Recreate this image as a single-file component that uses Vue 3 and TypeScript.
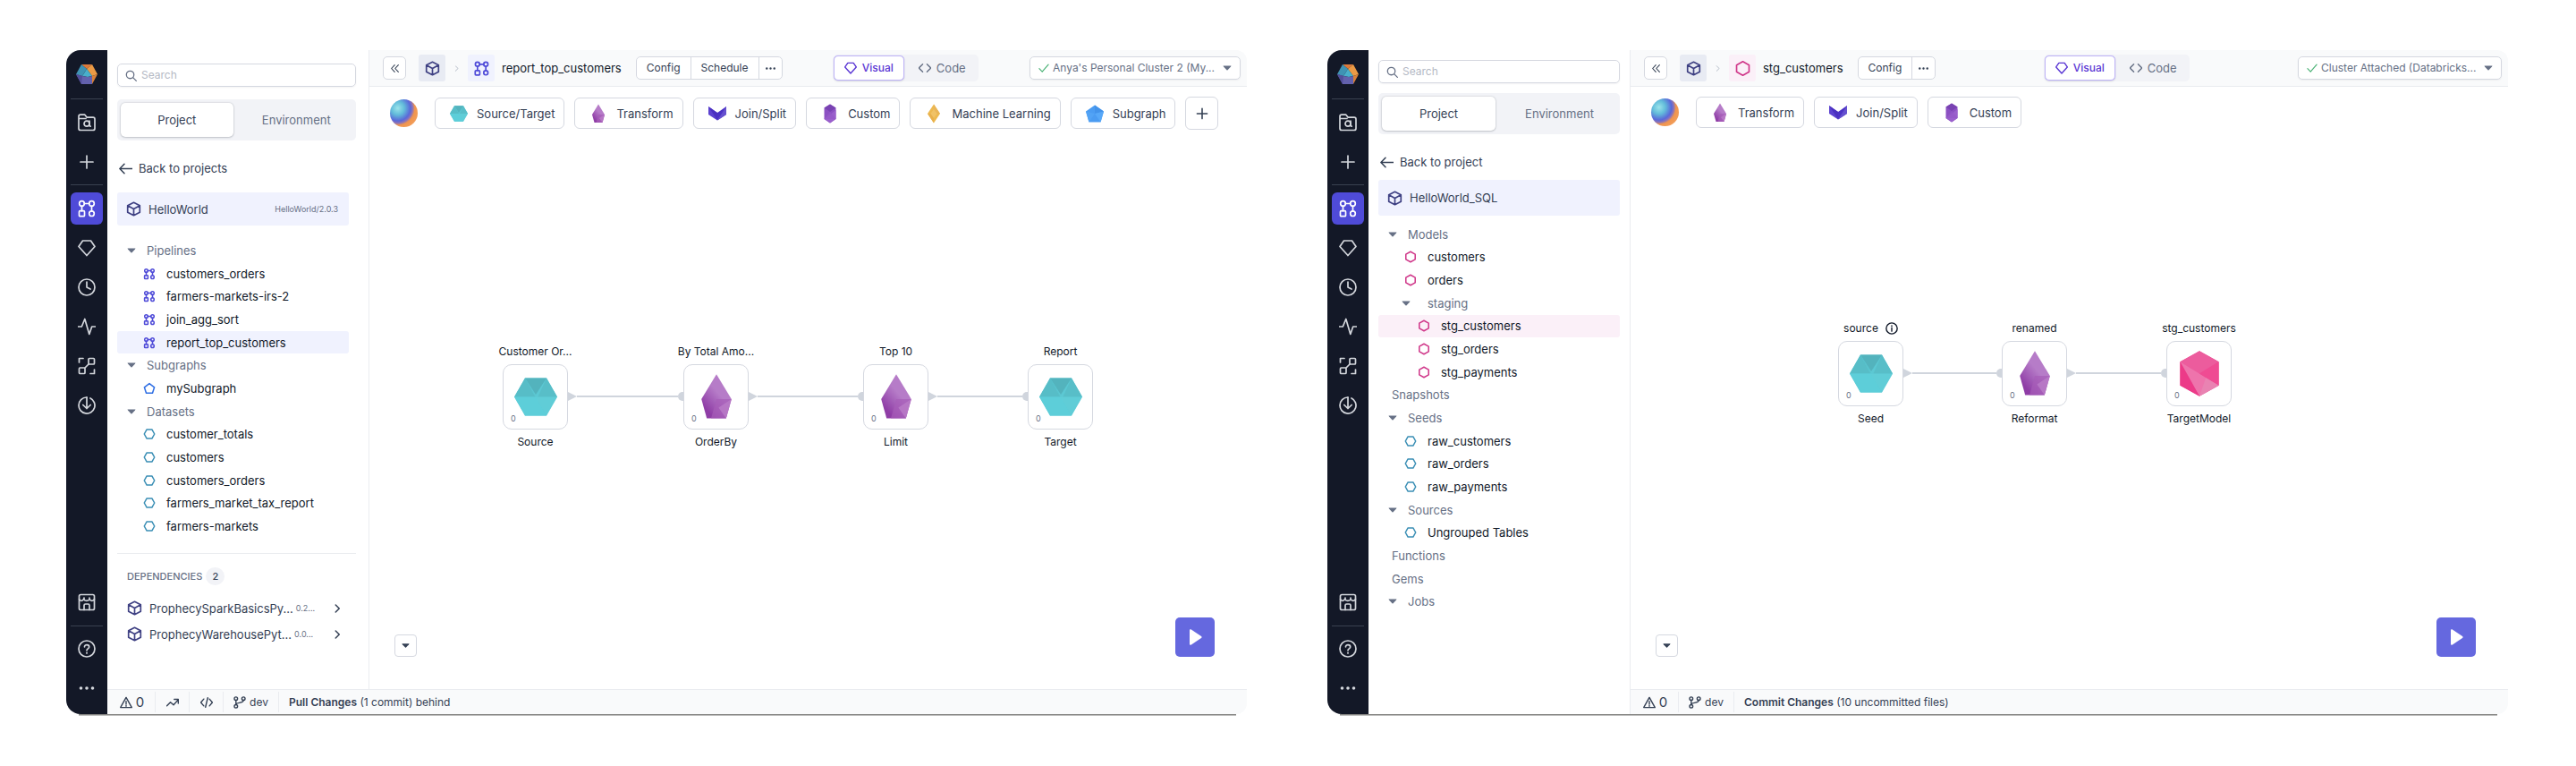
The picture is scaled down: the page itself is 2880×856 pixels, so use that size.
<script setup lang="ts">
type RowKind = 'group' | 'plain' | 'item' | 'subgroup' | 'subitem'

interface TreeRow {
  kind: RowKind
  label: string
  icon?: string
  tone?: string
  selected?: boolean
}
interface GraphNode {
  title: string
  label: string
  gem: string
  x: number
  info?: boolean
}
interface Dependency {
  name: string
  version: string
}
interface Workspace {
  id: string
  back: string
  project: string
  version?: string
  rows: TreeRow[]
  dependencies: Dependency[]
  wideStatus: boolean
  entityIcon: string
  entityTone: string
  entity: string
  actions: string[]
  cluster: string
  gems: { label: string; gem: string }[]
  canAdd: boolean
  nodes: GraphNode[]
  nodeTop: number
  statusIcons: string[]
  commitAction: string
  commitNote: string
}

const NODE_SIZE = 73

const icons: Record<string, string> = {
  folder:
    '<path d="M1 5.500V3.200C1 2 1.800 1.200 3 1.200h4.800l2.400 3H17c1.200 0 2 .8 2 2v10.300c0 1.200-.8 2-2 2H3c-1.200 0-2-.8-2-2V5.500h8"/><circle cx="10" cy="11.200" r="3"/><path d="M13 8.200v5.200l1.200.8"/>',
  plus: '<path d="M10 3v14M3 10h14"/>',
  pipeline:
    '<circle cx="4.500" cy="4.500" r="2.800"/><circle cx="15.500" cy="4.500" r="2.800"/><circle cx="15.500" cy="15.700" r="2.800"/><rect x="1.500" y="12.700" width="6" height="6" rx="1"/><path d="M7.300 4.500h5.400M4.500 7.300v5.400M15.500 7.300v5.600"/>',
  diamond: '<path d="M5.500 2h9L19 8.500 10 18.500 1 8.500z"/>',
  clock: '<circle cx="10" cy="10" r="9"/><path d="M10 4v6l4 2"/>',
  activity: '<path d="M.5 10h3.800L7.800 1.500l5 17L15.700 10h3.800"/>',
  nodes:
    '<path d="M1.500 6V1.500H6M18.500 14v4.500H14"/><rect x="12" y="1.500" width="6.500" height="6.500" rx="1"/><rect x="1.500" y="12" width="6.500" height="6.500" rx="1"/><path d="M8 12l4-4"/>',
  download: '<path d="M10 1v12.500M5.800 9.500l4.200 4 4.200-4"/><path d="M10 1C5 1 1 5 1 10a9 9 0 1 0 13-8"/>',
  store:
    '<rect x="1.500" y="1.500" width="17" height="17" rx="1.800"/><path d="M1.500 6.500c1 2.500 4 2.500 5 0 1.200 2.500 5.500 2.500 6.700 0 1 2.500 4.300 2.500 5.300 0M7 5v2M13 5v2M7 18.500v-5c0-.8.500-1.500 1.500-1.500h3c1 0 1.500.7 1.500 1.500v5"/>',
  help: '<circle cx="10" cy="10" r="9"/><path d="M7.500 7.800c0-3 5.200-3 5.200.2 0 1.800-2.700 2-2.700 3.800M10 14.300v.7"/>',
  dots: '<g fill="currentColor" stroke="none"><circle cx="3.500" cy="10" r="1.800"/><circle cx="10" cy="10" r="1.800"/><circle cx="16.500" cy="10" r="1.800"/></g>',
  cube: '<path d="M10 1.500l8 4.200v8.600l-8 4.200-8-4.200V5.700zM2 5.700l8 4.300 8-4.300M10 10v8.500"/>',
  hexFlat: '<path d="M5.500 2h9L19 10l-4.500 8h-9L1 10z"/>',
  hexTall: '<path d="M10 1l8.200 4.500v9L10 19l-8.200-4.500v-9z"/>',
  pentagon: '<path d="M10 1.500l8.800 6.600-3.300 10.200h-11L1.200 8.100z"/>',
  search: '<circle cx="8.500" cy="8.500" r="6.500"/><path d="M13.300 13.300L19 19"/>',
  back: '<path d="M19.500 10H1.500M8 3l-6.800 7L8 17"/>',
  caret: '<path d="M1 5h18l-1 2-7 7.500q-1 1-2 0L2 7z" fill="currentColor" stroke="none"/>',
  collapse: '<path d="M9.500 3L3 10l6.500 7M17 3l-6.500 7 6.500 7"/>',
  chevron: '<path d="M6.500 2l8 8-8 8"/>',
  code: '<path d="M6.500 4l-6 6 6 6M13.500 4l6 6-6 6"/>',
  codeSlash: '<path d="M5.500 4.500L.8 10l4.700 5.500M14.500 4.500l4.700 5.500-4.700 5.500M11.800 2.500l-3.600 15"/>',
  check: '<path d="M1.500 11l5.500 6L18.500 3.500"/>',
  warning: '<path d="M10 2l9 16H1zM10 8v5M10 15v1"/>',
  trend: '<path d="M.8 15.500l5.700-6 5 4.500 7.500-8.500M12.500 5H19v6.500"/>',
  branch: '<circle cx="4" cy="3.800" r="2.600"/><circle cx="4" cy="16.200" r="2.600"/><circle cx="16" cy="3.800" r="2.600"/><path d="M4 6.400v7.200M16 6.400c0 6-12 2.500-12 7.200"/>',
  info: '<circle cx="10" cy="10" r="8.800"/><path d="M10 9v5.500M10 5.500v1"/>',
  play: '<path d="M4 2.500c0-1.200 1-1.500 1.800-1L17 9c.8.600.8 1.400 0 2L5.800 18.500C5 19 4 18.700 4 17.500z" fill="currentColor" stroke="none"/>',
}

const gems: Record<string, string> = {
  source:
    '<path d="M10 4.500h20L40 22 30 39.500H10L0 22z" fill="#5cc8d3"/><path d="M10 4.500h20L20 20z" fill="#53b3bd"/><path d="M30 4.500L40 22H22z" fill="#58bec8"/><path d="M10 4.500L20 22H0z" fill="#57bdc7"/><path d="M0 22h20l10 17.500H10z" fill="#5dced9"/><path d="M10 6l20 33.500L40 22H20z" fill="#62d0da" opacity=".6"/>',
  transform:
    '<defs><linearGradient id="violet" gradientUnits="userSpaceOnUse" x1="9" y1="32" x2="23" y2="20"><stop offset="0" stop-color="#8f3da6"/><stop offset="1" stop-color="#b67cc8"/></linearGradient></defs><path d="M20 1l14 23-5 18H11L6 24z" fill="url(#violet)"/><path d="M20 24h14l-5 18H15z" fill="#a65cb8" opacity=".7"/><path d="M34 24l-12 8 7 10z" fill="#ba7dc8" opacity=".8"/>',
  join:
    '<path d="M0 6l20 14v17L0 24z" fill="#5c42d0"/><path d="M40 6L20 20v17l20-13z" fill="#4b32c4"/><path d="M0 6l20 31V20z" fill="#4a30c0"/><path d="M40 6v18L20 37z" fill="#6550cf"/>',
  custom:
    '<path d="M20 1l13 8v25l-13 9L7 34V9z" fill="#8b50c2"/><path d="M20 1l13 8-13 9L7 9z" fill="#7943b2"/><path d="M7 34l26-20v20l-13 9z" fill="#9a60cc"/><path d="M20 18l13 16H7z" fill="#9458c8" opacity=".7"/>',
  ml: '<path d="M20 1l14 21-14 21L6 22z" fill="#edb950"/><path d="M20 1l14 21H20z" fill="#e9b558"/><path d="M6 22h14v21z" fill="#e8b04c"/><path d="M20 12l7 10-7 10-7-10z" fill="#f0c266"/>',
  subgraph:
    '<path d="M20 3l20 14-7 24H7L0 17z" fill="#4b9cf2"/><path d="M20 3l20 14-20 5z" fill="#4393ea"/><path d="M20 22l20-5-7 24z" fill="#57a8f8"/><path d="M0 17l20 5L7 41z" fill="#52a3f5"/>',
  model:
    '<path d="M20 1l18 10v22L20 43 2 33V11z" fill="#ee4d94"/><path d="M20 1l18 10-18 11L2 11z" fill="#ec5c9d"/><path d="M2 11l36 22-18 10z" fill="#ee74ac"/><path d="M2 11l18 32L2 33z" fill="#ec3a88"/><path d="M38 11v22L20 22z" fill="#ef4b93"/><path d="M20 43l6-17 12 7z" fill="#e983b2"/>',
}

const railTop = ['folder', 'plus']
const railMain = ['pipeline', 'diamond', 'clock', 'activity', 'nodes', 'download']
const iconLabels: Record<string, string> = {
  folder: 'Browse',
  plus: 'Create',
  pipeline: 'Pipelines',
  diamond: 'Gems',
  clock: 'Jobs',
  activity: 'Monitoring',
  nodes: 'Lineage',
  download: 'Transpiler',
  trend: 'Trends',
  codeSlash: 'Source',
}

const pipe = (label: string, selected = false): TreeRow => ({ kind: 'item', label, icon: 'pipeline', tone: 'indigo', selected })
const dataset = (label: string): TreeRow => ({ kind: 'item', label, icon: 'hexFlat', tone: 'teal' })
const model = (label: string, kind: RowKind = 'item', selected = false): TreeRow => ({ kind, label, icon: 'hexTall', tone: 'pink', selected })
const group = (label: string, kind: RowKind = 'group'): TreeRow => ({ kind, label })

const workspaces: Workspace[] = [
  {
    id: 'spark',
    back: 'Back to projects',
    project: 'HelloWorld',
    version: 'HelloWorld/2.0.3',
    rows: [
      group('Pipelines'),
      pipe('customers_orders'),
      pipe('farmers-markets-irs-2'),
      pipe('join_agg_sort'),
      pipe('report_top_customers', true),
      group('Subgraphs'),
      { kind: 'item', label: 'mySubgraph', icon: 'pentagon', tone: 'blue' },
      group('Datasets'),
      dataset('customer_totals'),
      dataset('customers'),
      dataset('customers_orders'),
      dataset('farmers_market_tax_report'),
      dataset('farmers-markets'),
    ],
    dependencies: [
      { name: 'ProphecySparkBasicsPy...', version: '0.2...' },
      { name: 'ProphecyWarehousePyt...', version: '0.0...' },
    ],
    wideStatus: true,
    entityIcon: 'pipeline',
    entityTone: 'indigo',
    entity: 'report_top_customers',
    actions: ['Config', 'Schedule'],
    cluster: "Anya's Personal Cluster 2 (My...",
    gems: [
      { label: 'Source/Target', gem: 'source' },
      { label: 'Transform', gem: 'transform' },
      { label: 'Join/Split', gem: 'join' },
      { label: 'Custom', gem: 'custom' },
      { label: 'Machine Learning', gem: 'ml' },
      { label: 'Subgraph', gem: 'subgraph' },
    ],
    canAdd: true,
    nodes: [
      { title: 'Customer Or...', label: 'Source', gem: 'source', x: 149 },
      { title: 'By Total Amo...', label: 'OrderBy', gem: 'transform', x: 351 },
      { title: 'Top 10', label: 'Limit', gem: 'transform', x: 552 },
      { title: 'Report', label: 'Target', gem: 'source', x: 736 },
    ],
    nodeTop: 288,
    statusIcons: ['trend', 'codeSlash'],
    commitAction: 'Pull Changes',
    commitNote: '(1 commit) behind',
  },
  {
    id: 'sql',
    back: 'Back to project',
    project: 'HelloWorld_SQL',
    rows: [
      group('Models'),
      model('customers'),
      model('orders'),
      group('staging', 'subgroup'),
      model('stg_customers', 'subitem', true),
      model('stg_orders', 'subitem'),
      model('stg_payments', 'subitem'),
      group('Snapshots', 'plain'),
      group('Seeds'),
      dataset('raw_customers'),
      dataset('raw_orders'),
      dataset('raw_payments'),
      group('Sources'),
      dataset('Ungrouped Tables'),
      group('Functions', 'plain'),
      group('Gems', 'plain'),
      group('Jobs'),
    ],
    dependencies: [],
    wideStatus: false,
    entityIcon: 'hexTall',
    entityTone: 'pink',
    entity: 'stg_customers',
    actions: ['Config'],
    cluster: 'Cluster Attached (Databricks...',
    gems: [
      { label: 'Transform', gem: 'transform' },
      { label: 'Join/Split', gem: 'join' },
      { label: 'Custom', gem: 'custom' },
    ],
    canAdd: false,
    nodes: [
      { title: 'source', label: 'Seed', gem: 'source', x: 232, info: true },
      { title: 'renamed', label: 'Reformat', gem: 'transform', x: 415 },
      { title: 'stg_customers', label: 'TargetModel', gem: 'model', x: 599 },
    ],
    nodeTop: 262,
    statusIcons: [],
    commitAction: 'Commit Changes',
    commitNote: '(10 uncommitted files)',
  },
]

const nodeStyle = (w: Workspace, n: GraphNode) => ({ left: `${n.x}px`, top: `${w.nodeTop}px` })
const wireStyle = (w: Workspace, i: number) => ({
  left: `${w.nodes[i].x + NODE_SIZE}px`,
  width: `${w.nodes[i + 1].x - w.nodes[i].x - NODE_SIZE}px`,
  top: `${w.nodeTop + 53}px`,
})
const hasCaret = (r: TreeRow) => r.kind === 'group' || r.kind === 'subgroup'
</script>

<template>
  <main class="page">
    <section v-for="w in workspaces" :key="w.id" class="window" :class="w.id" :aria-label="w.project">
      <div class="body">
        <nav class="rail" aria-label="Main">
          <a href="#" class="logo" aria-label="Home">
            <svg viewBox="0 0 24 22" width="24" height="22">
              <path d="M6 0h12l-6 5z" fill="#dd7a3a" />
              <path d="M18 0l6 11-6 2-6-8z" fill="#eb9a45" />
              <path d="M6 0l6 5-5 8-7-2z" fill="#3f93b4" />
              <path d="M12 5l6 8-5 1-6-1z" fill="#49aecb" />
              <path d="M0 11l7 2 6 1 5-1v9H6z" fill="#6361ad" />
              <path d="M0 11l7 2-1 9z" fill="#524e9b" />
              <path d="M24 11l-6 11v-9z" fill="#d98138" />
            </svg>
          </a>
          <hr />
          <button v-for="i in railTop" :key="i" type="button" class="rail-btn" :aria-label="iconLabels[i]">
            <span class="rail-face"><svg class="ic" viewBox="0 0 20 20" v-html="icons[i]" /></span>
          </button>
          <hr class="second" />
          <button v-for="i in railMain" :key="i" type="button" class="rail-btn" :class="{ active: i === 'pipeline' }" :aria-label="iconLabels[i]">
            <span class="rail-face"><svg class="ic" viewBox="0 0 20 20" v-html="icons[i]" /></span>
          </button>
          <span class="grow" />
          <button type="button" class="rail-btn" aria-label="Marketplace">
            <span class="rail-face"><svg class="ic" viewBox="0 0 20 20" v-html="icons.store" /></span>
          </button>
          <hr class="third" />
          <button type="button" class="rail-btn" aria-label="Help">
            <span class="rail-face"><svg class="ic" viewBox="0 0 20 20" v-html="icons.help" /></span>
          </button>
          <button type="button" class="rail-btn" aria-label="More">
            <span class="rail-face"><svg class="ic" viewBox="0 0 20 20" v-html="icons.dots" /></span>
          </button>
        </nav>

        <aside class="sidebar">
          <label class="search">
            <svg class="ic" viewBox="0 0 20 20" v-html="icons.search" />
            <input type="search" placeholder="Search" aria-label="Search" />
          </label>
          <div class="tabs" role="tablist">
            <button type="button" role="tab" aria-selected="true" class="tab on">Project</button>
            <button type="button" role="tab" aria-selected="false" class="tab">Environment</button>
          </div>
          <a href="#" class="back"><svg class="ic" viewBox="0 0 20 20" v-html="icons.back" />{{ w.back }}</a>
          <button type="button" class="project">
            <svg class="ic" viewBox="0 0 20 20" v-html="icons.cube" />
            <span class="project-name">{{ w.project }}</span>
            <span v-if="w.version" class="project-version">{{ w.version }}</span>
          </button>
          <ul class="tree">
            <li v-for="(r, i) in w.rows" :key="i">
              <button type="button" class="row" :class="[r.kind, { selected: r.selected }]">
                <svg v-if="hasCaret(r)" class="caret" viewBox="0 0 20 20" v-html="icons.caret" />
                <svg v-if="r.icon" class="ic" :class="r.tone" viewBox="-1 -1 22 22" v-html="icons[r.icon]" />
                <span>{{ r.label }}</span>
              </button>
            </li>
          </ul>
          <section v-if="w.dependencies.length" class="deps">
            <h2>DEPENDENCIES <span class="count">{{ w.dependencies.length }}</span></h2>
            <button v-for="d in w.dependencies" :key="d.name" type="button" class="dep">
              <svg class="ic cube" viewBox="0 0 20 20" v-html="icons.cube" />
              <span>{{ d.name }}</span>
              <small>{{ d.version }}</small>
              <svg class="ic go" viewBox="0 0 20 20" v-html="icons.chevron" />
            </button>
          </section>
        </aside>

        <div class="main">
          <header class="topbar">
            <div class="crumbs">
              <button type="button" class="collapse" aria-label="Collapse sidebar"><svg class="ic" viewBox="0 0 20 20" v-html="icons.collapse" /></button>
              <a href="#" class="crumb home" aria-label="Project"><svg class="ic" viewBox="0 0 20 20" v-html="icons.cube" /></a>
              <svg class="ic sep" viewBox="0 0 20 20" v-html="icons.chevron" />
              <span class="crumb" :class="w.entityTone"><svg class="ic" viewBox="0 0 20 20" v-html="icons[w.entityIcon]" /></span>
              <h1>{{ w.entity }}</h1>
              <div class="actions">
                <button v-for="a in w.actions" :key="a" type="button">{{ a }}</button>
                <button type="button" class="more" aria-label="More actions"><svg viewBox="0 0 20 20" v-html="icons.dots" /></button>
              </div>
            </div>
            <div class="modes">
              <button type="button" class="mode on" aria-pressed="true"><svg class="ic" viewBox="0 0 20 20" v-html="icons.diamond" />Visual</button>
              <button type="button" class="mode" aria-pressed="false"><svg class="ic" viewBox="0 0 20 20" v-html="icons.code" />Code</button>
            </div>
            <label class="cluster">
              <svg class="ic tick" viewBox="0 0 20 20" v-html="icons.check" />
              <select aria-label="Cluster"><option>{{ w.cluster }}</option></select>
              <svg class="caret" viewBox="0 0 20 20" v-html="icons.caret" />
            </label>
          </header>

          <div class="canvas">
            <div class="palette">
              <button type="button" class="orb" aria-label="Copilot" />
              <button v-for="g in w.gems" :key="g.label" type="button" class="gem">
                <svg viewBox="0 0 40 44" v-html="gems[g.gem]" />{{ g.label }}
              </button>
              <button v-if="w.canAdd" type="button" class="add" aria-label="Add"><svg class="ic" viewBox="0 0 20 20" v-html="icons.plus" /></button>
            </div>

            <div v-for="(n, i) in w.nodes.slice(1)" :key="'wire' + n.x" class="wire" :style="wireStyle(w, i)">
              <span class="tip" /><span class="line" /><span class="port" />
            </div>
            <div v-for="n in w.nodes" :key="n.x" class="node" :style="nodeStyle(w, n)">
              <span class="node-title">{{ n.title }}<svg v-if="n.info" class="ic" viewBox="0 0 20 20" v-html="icons.info" /></span>
              <button type="button" class="node-box" :aria-label="n.title">
                <svg viewBox="0 0 40 44" v-html="gems[n.gem]" />
                <small>0</small>
              </button>
              <span class="node-label">{{ n.label }}</span>
            </div>

            <div class="controls">
              <button type="button" class="drawer" aria-label="Open panel"><svg viewBox="0 0 20 20" v-html="icons.caret" /></button>
              <button type="button" class="run" aria-label="Run"><svg viewBox="0 0 20 20" v-html="icons.play" /></button>
            </div>
          </div>
        </div>

        <footer class="status" :class="{ wide: w.wideStatus }">
          <button type="button" class="cell warn"><svg class="ic" viewBox="0 0 20 20" v-html="icons.warning" />0</button>
          <button v-for="s in w.statusIcons" :key="s" type="button" class="cell icon-only" :aria-label="iconLabels[s]"><svg class="ic" viewBox="0 0 20 20" v-html="icons[s]" /></button>
          <button type="button" class="cell branch"><svg class="ic" viewBox="0 0 20 20" v-html="icons.branch" />dev</button>
          <button type="button" class="commit"><b>{{ w.commitAction }}</b> {{ w.commitNote }}</button>
        </footer>
      </div>
      <div class="edge" />
    </section>
  </main>
</template>

<style>
body {
  margin: 0;
  background: #fff;
}
</style>

<style scoped>
* {
  box-sizing: border-box;
}
.page {
  display: flex;
  gap: 90px;
  min-height: 100vh;
  padding: 56px 76px 56px 74px;
  font-family: Inter, "Liberation Sans", sans-serif;
  font-size: 13px;
  line-height: 20px;
  color: #101828;
}
button {
  margin: 0;
  padding: 0;
  border: 0;
  background: none;
  font: inherit;
  color: inherit;
  text-align: left;
  white-space: nowrap;
}
a {
  color: inherit;
  text-decoration: none;
}
svg {
  display: block;
  flex: none;
}
.ic {
  fill: none;
  stroke: currentColor;
  stroke-width: 2;
  stroke-linecap: round;
  stroke-linejoin: round;
}
.window {
  display: flex;
  flex: 1;
  flex-direction: column;
  min-width: 0;
}
.body {
  display: grid;
  flex: 1;
  grid-template-columns: 46px 293px minmax(0, 1fr);
  grid-template-rows: minmax(0, 1fr) 28px;
  overflow: hidden;
  border-radius: 16px 12px 12px 16px;
}
.edge {
  height: 2px;
  margin: 0 12px 0 14px;
  background: linear-gradient(#858583 50%, #bdbdbb 50%);
}

/* navigation rail */
.rail {
  display: flex;
  grid-row: 1 / 3;
  flex-direction: column;
  align-items: center;
  padding-bottom: 7px;
  background: #131827;
  color: #d3d6dc;
}
.logo {
  display: grid;
  place-items: center;
  height: 54px;
}
.rail hr {
  width: 36px;
  height: 1px;
  margin: 0 0 4px;
  border: 0;
  background: #3a4150;
}
.rail hr.second {
  margin: 3px 0 4px;
}
.rail hr.third {
  margin: 4px 0 3px;
}
.rail-btn {
  display: grid;
  place-items: center;
  width: 46px;
  height: 44px;
}
.rail-face {
  display: grid;
  place-items: center;
  width: 36px;
  height: 36px;
  border-radius: 6px;
}
.rail-btn.active .rail-face {
  background: #4f4bd8;
  color: #fff;
}
.rail .ic {
  width: 20px;
  height: 20px;
  stroke-width: 1.7;
}
.grow {
  flex: 1;
}

/* sidebar */
.sidebar {
  display: flex;
  flex-direction: column;
  padding: 15px 14px 0 11px;
  border-right: 1px solid #eaecf0;
  background: #fff;
}
.sql .sidebar {
  grid-row: 1 / 3;
  padding: 11px 11px 0;
}
.search {
  display: flex;
  align-items: center;
  gap: 5px;
  height: 26px;
  padding: 0 8px;
  border: 1px solid #d5d8e0;
  border-radius: 5px;
  box-shadow: 0 1px 2px #1018280d;
  color: #667085;
}
.search .ic {
  width: 13px;
  height: 13px;
}
.search input {
  flex: 1;
  min-width: 0;
  padding: 0;
  border: 0;
  outline: 0;
  background: none;
  font: inherit;
  font-size: 12px;
  appearance: none;
}
.search input::placeholder {
  color: #b4b9c4;
}
.tabs {
  display: flex;
  gap: 8px;
  margin-top: 14px;
  padding: 4px;
  border-radius: 5px;
  background: #f2f3f7;
}
.sql .tabs {
  margin-top: 11px;
}
.tab {
  flex: 1;
  height: 38px;
  border-radius: 5px;
  text-align: center;
  color: #667085;
}
.tab.on {
  background: #fff;
  box-shadow: 0 0 2px #10182840, 0 1px 2px #10182826;
  color: #344054;
}
.back {
  display: flex;
  align-items: center;
  gap: 7px;
  margin-top: 21px;
  padding-left: 2px;
  color: #344054;
}
.back .ic {
  width: 15px;
  height: 15px;
}
.project {
  display: flex;
  align-items: center;
  gap: 8px;
  height: 37px;
  margin: 17px 8px 0 0;
  padding: 0 12px 0 10px;
  border-radius: 3px;
  background: #f0f2fe;
  color: #344054;
}
.sql .project {
  height: 40px;
  margin: 10px 0 0;
}
.project .ic {
  width: 17px;
  height: 17px;
  color: #3f4183;
}
.project-name {
  flex: 1;
}
.project-version {
  font-size: 9px;
  color: #667085;
}
.tree {
  display: grid;
  grid-auto-rows: 1fr;
  height: 334px;
  margin: 15px 8px 0 0;
  padding: 0;
  list-style: none;
}
.sql .tree {
  height: 436px;
  margin: 8px 0 0;
}
.tree li {
  display: flex;
  min-height: 0;
}
.row {
  display: flex;
  flex: 1;
  align-items: center;
  gap: 12px;
  border-radius: 3px;
}
.row.group {
  padding-left: 11px;
  color: #667085;
}
.row.plain {
  padding-left: 15px;
  color: #667085;
}
.row.item {
  padding-left: 29px;
}
.row.subgroup {
  gap: 19px;
  padding-left: 26px;
  color: #667085;
}
.row.subitem {
  padding-left: 44px;
}
.row.selected {
  background: #f0f2fe;
}
.sql .row.selected {
  background: #fbf0f8;
}
.caret {
  width: 10px;
  height: 10px;
  color: #667085;
}
.row .ic {
  width: 14px;
  height: 14px;
  stroke-width: 2.4;
}
.indigo {
  color: #4f4bd8;
}
.blue {
  color: #2f6fe4;
}
.teal {
  color: #3b8fb5;
}
.pink {
  color: #d0388a;
}
.deps {
  display: flex;
  flex-direction: column;
  margin-top: 17px;
  padding: 15px 0 0 11px;
  border-top: 1px solid #eaecf0;
}
.deps h2 {
  display: flex;
  align-items: center;
  gap: 4px;
  margin: 0 0 11px;
  font-size: 11px;
  font-weight: 500;
  color: #667085;
}
.count {
  width: 21px;
  border-radius: 10px;
  background: #f2f3f7;
  text-align: center;
  color: #344054;
}
.dep {
  display: flex;
  align-items: center;
  height: 29px;
  color: #344054;
}
.dep .cube {
  width: 17px;
  height: 17px;
  margin-right: 8px;
  color: #3f4183;
}
.dep small {
  flex: 1;
  margin-left: 3px;
  font-size: 9px;
  color: #667085;
}
.dep .go {
  width: 10px;
  height: 10px;
  margin-right: 16px;
  stroke-width: 3;
}

/* top bar */
.main {
  display: flex;
  flex-direction: column;
  min-width: 0;
}
.topbar {
  display: flex;
  align-items: center;
  justify-content: space-between;
  height: 41px;
  padding: 0 7px 0 15px;
  border-bottom: 1px solid #eaecf0;
  background: #f9fafb;
  font-size: 12px;
}
.crumbs {
  display: flex;
  align-items: center;
}
.collapse {
  display: grid;
  place-items: center;
  width: 26px;
  height: 26px;
  margin-right: 14px;
  border: 1px solid #d5d8e0;
  border-radius: 5px;
  background: #fff;
  color: #344054;
}
.collapse .ic {
  width: 11px;
  height: 11px;
}
.crumb {
  display: grid;
  place-items: center;
  width: 30px;
  height: 30px;
  border-radius: 3px;
  background: #f0f2fe;
}
.crumb.home {
  background: #e8ebf3;
  color: #3f4183;
}
.crumb.pink {
  background: #fbf0f8;
}
.crumb .ic {
  width: 17px;
  height: 17px;
}
.sep {
  width: 7px;
  height: 7px;
  margin: 0 9px;
  color: #98a2b3;
}
h1 {
  margin: 0 16px 0 8px;
  font-size: 13px;
  font-weight: 400;
  line-height: 20px;
}
.actions {
  display: flex;
  height: 26px;
  border: 1px solid #d5d8e0;
  border-radius: 5px;
  background: #fff;
  color: #344054;
}
.actions button {
  display: flex;
  align-items: center;
  padding: 0 11px;
}
.actions button + button {
  border-left: 1px solid #d5d8e0;
}
.actions .more {
  padding: 0 6px;
}
.more svg {
  width: 13px;
  height: 13px;
}
.modes {
  display: flex;
  height: 30px;
  padding: 1px 0;
  border-radius: 5px;
  background: #f2f3f7;
}
.mode {
  display: flex;
  align-items: center;
  gap: 6px;
  padding: 0 14px 0 16px;
  font-size: 13px;
  color: #667085;
}
.mode.on {
  padding: 0 11px;
  border: 1px solid #c0b5f7;
  border-radius: 5px;
  background: #fff;
  box-shadow: 0 0 1px #b9aef5, 0 1px 2px #10182820;
  font-size: 12px;
  font-weight: 500;
  color: #5a36d4;
}
.mode .ic {
  width: 14px;
  height: 14px;
}
.cluster {
  display: flex;
  align-items: center;
  height: 26px;
  padding: 0 9px;
  border: 1px solid #d5d8e0;
  border-radius: 5px;
  background: #fff;
  box-shadow: 0 1px 2px #1018280d;
  color: #667085;
}
.tick {
  width: 12px;
  height: 12px;
  margin-right: 4px;
  color: #4cb377;
}
.cluster select {
  margin-right: 8px;
  padding: 0;
  border: 0;
  background: none;
  font: inherit;
  color: inherit;
  appearance: none;
}

/* canvas */
.canvas {
  display: flex;
  position: relative;
  flex: 1;
  flex-direction: column;
  justify-content: space-between;
  background: #fff;
}
.palette {
  display: flex;
  align-items: center;
  gap: 11px;
  padding: 11px 23px 0;
  color: #344054;
}
.orb {
  width: 31px;
  height: 31px;
  margin-right: 8px;
  border-radius: 50%;
  background: radial-gradient(circle at 28% 32%, #9be4ea 0, #62bcda 24%, #5a68d9 46%, #8b73b8 54%, #f0954e 62%, #f4a868 100%);
}
.gem {
  display: flex;
  align-items: center;
  gap: 10px;
  height: 35px;
  padding: 0 10px 0 16px;
  border: 1px solid #d5d8e0;
  border-radius: 6px;
  background: #fff;
}
.gem svg {
  width: 20px;
  height: 22px;
}
.add {
  display: grid;
  place-items: center;
  width: 37px;
  height: 37px;
  border: 1px solid #d5d8e0;
  border-radius: 6px;
}
.add .ic {
  width: 16px;
  height: 16px;
}
.node {
  display: flex;
  position: absolute;
  flex-direction: column;
  align-items: center;
  gap: 6px;
  width: 73px;
  font-size: 12px;
  line-height: 16px;
  white-space: nowrap;
}
.node-title {
  display: flex;
  align-items: center;
  gap: 8px;
}
.node-title .ic {
  width: 14px;
  height: 14px;
}
.node-box {
  display: grid;
  position: relative;
  place-items: center;
  width: 73px;
  height: 73px;
  border: 1px solid #d5d8e0;
  border-radius: 10px;
  background: #fff;
}
.node-box svg {
  width: 48px;
  height: 53px;
}
.node-box small {
  position: absolute;
  bottom: 3px;
  left: 8px;
  font-size: 9px;
  color: #667085;
}
.wire {
  display: flex;
  position: absolute;
  align-items: center;
  height: 10px;
}
.tip {
  border: solid transparent;
  border-width: 5px 0 5px 10px;
  border-left-color: #d0d5dd;
}
.line {
  flex: 1;
  height: 2px;
  background: #d0d5dd;
}
.port {
  width: 6px;
  height: 10px;
  border-radius: 5px 0 0 5px;
  background: #d0d5dd;
}
.controls {
  display: flex;
  align-items: flex-end;
  justify-content: space-between;
  padding: 0 36px 36px 28px;
}
.drawer {
  display: grid;
  place-items: center;
  width: 25px;
  height: 25px;
  border: 1px solid #d5d8e0;
  border-radius: 4px;
}
.drawer svg {
  width: 9px;
  height: 9px;
  color: #344054;
}
.run {
  display: grid;
  place-items: center;
  width: 44px;
  height: 44px;
  border-radius: 5px;
  background: #6568df;
  color: #fff;
}
.run svg {
  width: 20px;
  height: 20px;
}

/* status bar */
.status {
  display: flex;
  grid-column: 3;
  border-top: 1px solid #eaecf0;
  background: #f9fafb;
  font-size: 12px;
  color: #344054;
}
.status.wide {
  grid-column: 2 / 4;
}
.cell {
  display: flex;
  align-items: center;
  justify-content: center;
  gap: 4px;
  margin: 2px 0;
  border-right: 1px solid #eaecf0;
}
.cell .ic {
  width: 14px;
  height: 14px;
}
.cell.warn {
  width: 54px;
  padding-left: 2px;
  font-size: 15px;
}
.cell.icon-only {
  width: 38px;
}
.cell.branch {
  width: 62px;
}
.commit {
  padding: 0 11px;
}
.commit b {
  font-weight: 600;
}
</style>
